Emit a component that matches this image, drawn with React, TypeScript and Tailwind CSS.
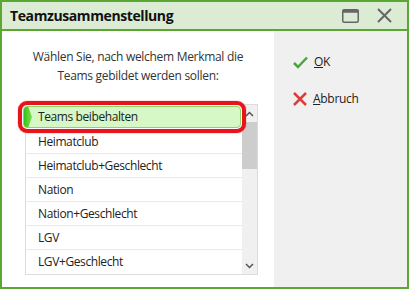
import React from "react";

const items = [
  "Teams beibehalten",
  "Heimatclub",
  "Heimatclub+Geschlecht",
  "Nation",
  "Nation+Geschlecht",
  "LGV",
  "LGV+Geschlecht",
];

export default function App() {
  return (
    <div
      className="w-[409px] h-[289px] border-2 border-[#5aa832] flex flex-col bg-white overflow-hidden"
      style={{ fontFamily: '"Open Sans", sans-serif' }}
    >
      {/* Title bar */}
      <div className="h-[27px] shrink-0 bg-[#dcebd4] border-b-2 border-[#5aa832] flex items-center pl-2 pr-2 box-content">
        <div className="text-[14px] font-bold text-[#111] flex-1 leading-none tracking-[-0.4px]">Teamzusammenstellung</div>
        <svg width="17" height="14" viewBox="0 0 17 14" className="mr-[18px]">
          <rect x="0.75" y="0.75" width="15.5" height="12.5" rx="1.5" fill="none" stroke="#666" strokeWidth="1.5" />
          <rect x="0.75" y="0.75" width="15.5" height="3" fill="#666" />
        </svg>
        <svg width="15" height="15" viewBox="0 0 15 15" className="mr-[7px]">
          <path d="M1 1 L14 14 M14 1 L1 14" stroke="#666" strokeWidth="2" />
        </svg>
      </div>

      <div className="flex flex-1">
        {/* Left panel */}
        <div className="w-[272px] bg-white flex flex-col items-center">
          <div className="text-[12px] text-[#333] text-center leading-[19px] mt-[16px] tracking-[-0.3px]">
            Wählen Sie, nach welchem Merkmal die
            <br />
            Teams gebildet werden sollen:
          </div>
          <div className="mt-[19px] self-start ml-[23px] w-[233px] h-[171px] border border-[#dcdcdc] flex relative">
            <div className="flex-1 flex flex-col">
              {items.map((t, i) => (
                <div
                  key={t}
                  className={
                    i === 0
                      ? "h-[24px] shrink-0 flex items-center pl-[12px] text-[12px] tracking-[-0.4px] text-[#222]"
                      : "h-[24px] shrink-0 flex items-center pl-[12px] text-[12px] tracking-[-0.4px] text-[#222] border-t border-[#ebebeb]"
                  }
                >
                  {i === 0 ? "" : t}
                </div>
              ))}
            </div>
            {/* Scrollbar */}
            <div className="w-[15px] bg-[#f0f0f0] flex flex-col items-center">
              <div className="h-[17px] flex items-center justify-center">
                <svg width="9" height="6" viewBox="0 0 9 6">
                  <path d="M1 5 L4.5 1.5 L8 5" fill="none" stroke="#555" strokeWidth="1.5" />
                </svg>
              </div>
              <div className="w-full h-[47px] bg-[#cdcdcd]" />
              <div className="flex-1" />
              <div className="h-[17px] flex items-center justify-center">
                <svg width="9" height="6" viewBox="0 0 9 6">
                  <path d="M1 1 L4.5 4.5 L8 1" fill="none" stroke="#555" strokeWidth="1.5" />
                </svg>
              </div>
            </div>
            {/* Selected row highlight */}
            <div className="absolute left-[-8px] top-[-4px] w-[228px] h-[32px] rounded-[9px] border-[4px] border-[#e8141c] p-[1px] shadow-[0_0_1px_#b00]">
              <div className="w-full h-full rounded-[4px] bg-[#d6f7c6] border border-[#8fd46a] flex items-center relative overflow-hidden">
                <div className="absolute left-0 top-0 h-full w-[8px] bg-gradient-to-r from-[#2fc40a] to-[#7ee04f] [clip-path:polygon(0_0,55%_0,100%_50%,55%_100%,0_100%)]" />
                <span className="pl-[14px] text-[12px] tracking-[-0.4px] text-[#222]">Teams beibehalten</span>
              </div>
            </div>
          </div>
        </div>

        {/* Right panel */}
        <div className="flex-1 bg-[#f0f0f0] flex flex-col pl-[19px] pt-[22px] gap-[19px]">
          <div className="flex items-center gap-[6px] text-[12px] tracking-[-0.3px] text-[#222]">
            <svg width="15" height="13" viewBox="0 0 15 13">
              <path d="M1 7 L5 11 L14 1.5" fill="none" stroke="#4aa63a" strokeWidth="2.5" />
            </svg>
            <span>
              <span className="underline">O</span>K
            </span>
          </div>
          <div className="flex items-center gap-[6px] text-[12px] tracking-[-0.3px] text-[#222]">
            <svg width="14" height="14" viewBox="0 0 14 14">
              <path d="M1 1 L13 13 M13 1 L1 13" stroke="#e03c3c" strokeWidth="2.5" />
            </svg>
            <span>
              <span className="underline">A</span>bbruch
            </span>
          </div>
        </div>
      </div>
    </div>
  );
}
